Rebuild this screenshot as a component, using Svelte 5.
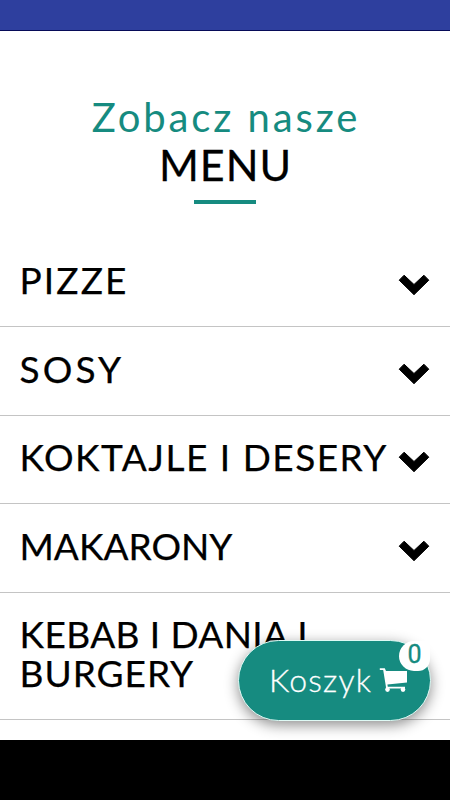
<script>
    let categories = [
        { lines: [{ text: 'PIZZE', spacing: 2.1 }] },
        { lines: [{ text: 'SOSY', spacing: 3.1 }] },
        { lines: [{ text: 'KOKTAJLE I DESERY', spacing: 1.5 }] },
        { lines: [{ text: 'MAKARONY', spacing: 0 }] },
        {
            lines: [
                { text: 'KEBAB I DANIA I', spacing: 0.4 },
                { text: 'BURGERY', spacing: 1 },
            ],
            long: true,
        },
    ];
    let cartCount = 0;
</script>

<div class="page">
    <div class="status-bar"></div>

    <header class="heading">
        <p class="intro">Zobacz nasze</p>
        <h1>MENU</h1>
        <div class="underline"></div>
    </header>

    <main>
        {#each categories as category}
            <section class="category">
                <h2>
                    {#each category.lines as line}
                        <span style:letter-spacing="{line.spacing}px">{line.text}</span>
                    {/each}
                </h2>
                {#if !category.long}
                    <svg class="chevron" viewBox="0 0 32 22">
                        <path
                            d="M1.2 6.2 6.1 1.2 16 10.5 25.9 1.2 30.8 6.2 16 20.7z"
                            stroke="#000"
                            stroke-linejoin="round"
                        />
                    </svg>
                {/if}
            </section>
        {/each}
    </main>

    <button class="cart">
        <span class="cart-label">Koszyk</span>
        <svg class="cart-icon" viewBox="0 0 29 26">
            <path d="M.8 1.2h5L7 4h21v11.6L8.4 17.4l.4 2.4H26v1.8H7.2L4.2 3H.8z" />
            <circle cx="8.5" cy="22.6" r="2.3" />
            <circle cx="24" cy="22.6" r="2.3" />
        </svg>
        <span class="badge">{cartCount}</span>
    </button>

    <div class="nav-bar"></div>
</div>

<style>
    :global(body) {
        background: #fff;
        overflow: hidden;
    }

    .page {
        position: relative;
        display: flex;
        flex-direction: column;
        height: 800px;
        font-family: Lato, sans-serif;
        color: #000;
    }

    .status-bar {
        flex: none;
        height: 30px;
        background: #2e3f9e;
        border-bottom: 1px solid #070b58;
    }

    .heading {
        flex: none;
        box-sizing: border-box;
        height: 207.5px;
        padding-top: 62px;
        text-align: center;
    }

    .intro {
        margin: 0;
        padding-left: 2px;
        font-size: 40px;
        line-height: 48px;
        color: #168b80;
        letter-spacing: 2.9px;
    }

    h1 {
        margin: 0;
        padding-left: 1px;
        font-size: 43px;
        font-weight: 400;
        line-height: 48px;
        letter-spacing: 1px;
        -webkit-text-stroke: 0.3px #000;
    }

    .underline {
        width: 62px;
        height: 4px;
        margin: 11px auto 0;
        background: #168b80;
    }

    main {
        flex: 1;
        min-height: 0;
        overflow: hidden;
    }

    .category {
        display: flex;
        justify-content: space-between;
        padding: 22.5px 20px 26.8px 19.5px;
        border-bottom: 1px solid #c4c4c4;
    }

    h2 {
        margin: 0;
        font-size: 37px;
        font-weight: 400;
        line-height: 38.3px;
        white-space: nowrap;
        -webkit-text-stroke: 0.25px #000;
    }

    h2 span {
        display: block;
    }

    .chevron {
        flex: none;
        width: 32px;
        height: 22px;
        margin: 13px 0 0 -20px;
    }

    .cart {
        position: absolute;
        left: 238px;
        top: 640px;
        display: flex;
        align-items: center;
        box-sizing: border-box;
        width: 193px;
        height: 81px;
        padding: 0 0 2px 30px;
        border: 1px solid #dffaf5;
        border-radius: 41px;
        background: #168b80;
        color: #fff;
        font-family: Lato, sans-serif;
        box-shadow: 0 4px 14px rgb(0 0 0 / 45%);
    }

    .cart-label {
        width: 110px;
        font-size: 32px;
        font-weight: 300;
        letter-spacing: 1.2px;
        text-align: left;
        -webkit-text-stroke: 0.3px #fff;
    }

    .cart-icon {
        flex: none;
        width: 29px;
        height: 26px;
        fill: #fff;
    }

    .badge {
        position: absolute;
        top: 0;
        right: 0;
        width: 31px;
        height: 30px;
        border-radius: 15px 4px 12px 15px;
        background: #fff;
        color: #168b80;
        font-family: Roboto, sans-serif;
        font-size: 25px;
        line-height: 28px;
        text-align: center;
        -webkit-text-stroke: 0.3px #168b80;
    }

    .nav-bar {
        position: relative;
        flex: none;
        height: 60px;
        background: #000;
    }
</style>
